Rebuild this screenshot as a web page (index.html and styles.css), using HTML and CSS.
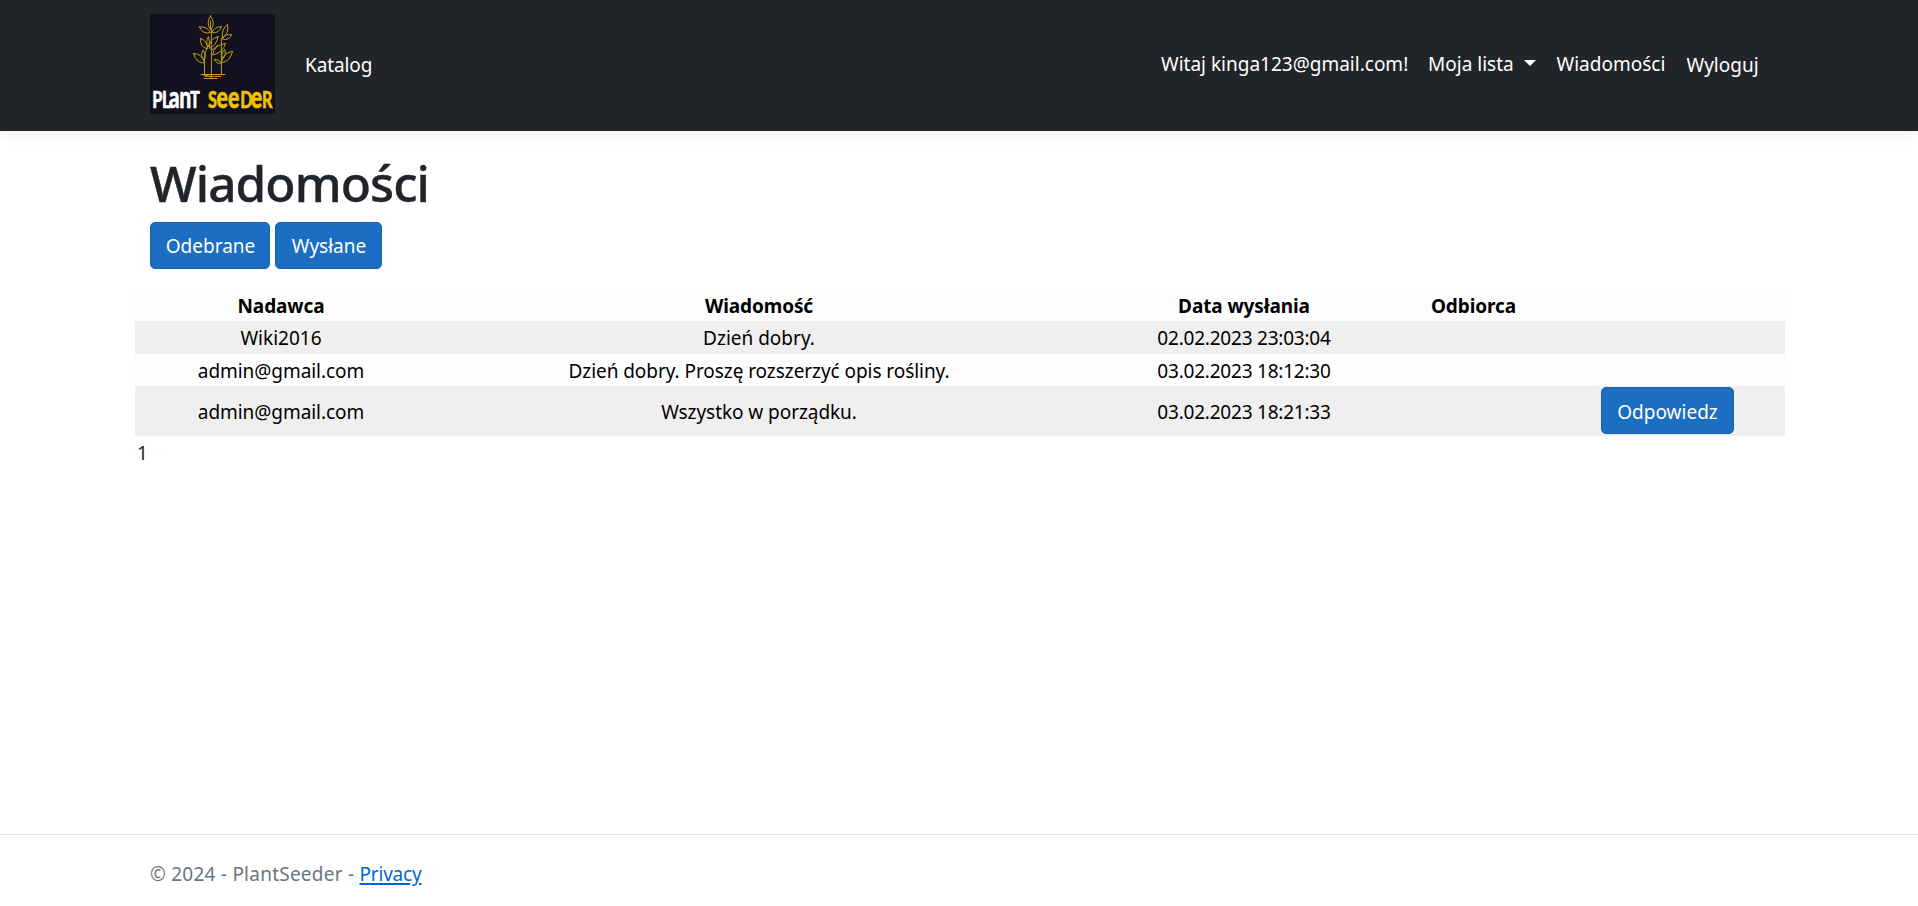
FILE: index.html
```html
<!DOCTYPE html>
<html lang="pl">
<head>
<meta charset="utf-8">
<title>Wiadomości - PlantSeeder</title>
<link rel="stylesheet" href="styles.css">
</head>
<body>
<header class="navbar">
  <div class="container navbar-inner">
    <a class="brand" href="#">
      <svg class="logo" viewBox="0 0 125 100" width="125" height="100" role="img" aria-label="Plant Seeder">
        <rect width="125" height="100" fill="#11111f"/>
        <g fill="none" stroke="#c39d12" stroke-width="1" stroke-linecap="round" stroke-linejoin="round">
          <path d="M54.5 60V44Q54.5 38 57 34M61.4 64V14M71.4 60V24"/>
          <path d="M51 60.5H75M55 62.3H71M52 60.5L60 62.5M54 64.5H67"/>
          <path d="M60.5 2Q55.5 9 60.8 16Q66 9 60.5 2ZM60.5 7V14"/>
          <path d="M49.500 13Q57 12 60.500 18.500Q53 21 49.500 13ZM71.500 12.500Q64 13 62 18.500Q69 20 71.500 12.500Z"/>
          <path d="M77.500 10.500Q71 15 72.500 24Q79.500 19 77.500 10.500ZM81.500 21Q75 19 72.500 25Q79 27 81.500 21Z"/>
          <path d="M50.500 24.500Q50 34 57.500 34.500Q57 26 50.500 24.500ZM68 22.500Q58 26 59.500 34.500Q67 31 68 22.500ZM58.300 23Q55 28 58.300 33Q61 28 58.300 23Z"/>
          <path d="M43.500 39.500Q46 49.500 55 49Q52 39.500 43.500 39.500ZM53 36.500Q49.500 41 54 46.500Q57 41 53 36.500Z"/>
          <path d="M75.500 29.500Q64 31 62.500 41Q73 39 75.500 29.500ZM62 36Q66 33 68 31"/>
          <path d="M82.500 37.500Q73 38 71.500 48.500Q80 48 82.500 37.500ZM74.500 35.500Q70.500 40 72.500 45Q77 41 74.500 35.500ZM64.500 45.500Q68 44.500 71.500 49Q66.500 50.500 64.500 45.500Z"/>
        </g>
        <g class="logo-text">
          <text class="logo-white"><tspan class="cap" x="3" y="94">P</tspan><tspan class="cap" x="16.500">L</tspan><tspan class="low" x="26">a</tspan><tspan class="low" x="40.500">n</tspan><tspan class="cap" x="55.500">T</tspan></text>
          <text class="logo-gold"><tspan class="cap" x="80.500" y="94">S</tspan><tspan class="low" x="92.500">e</tspan><tspan class="low" x="108.500">e</tspan><tspan class="cap" x="125.500">D</tspan><tspan class="low" x="140">e</tspan><tspan class="cap" x="155.500">R</tspan></text>
        </g>
      </svg>
    </a>
    <nav class="nav-main"><a class="nav-link low-link" href="#">Katalog</a></nav>
    <nav class="nav-user">
      <a class="nav-link greeting" href="#">Witaj kinga123@gmail.com!</a>
      <a class="nav-link dropdown" href="#">Moja lista<span class="caret"></span></a>
      <a class="nav-link messages" href="#">Wiadomości</a>
      <a class="nav-link logout low-link" href="#">Wyloguj</a>
    </nav>
  </div>
</header>

<main class="container">
  <h1>Wiadomości</h1>
  <div class="actions">
    <button class="btn btn-inbox">Odebrane</button>
    <button class="btn btn-sent">Wysłane</button>
  </div>
  <table class="messages-table">
    <colgroup><col class="c-from"><col class="c-text"><col class="c-date"><col class="c-to"><col class="c-act"></colgroup>
    <thead>
      <tr><th>Nadawca</th><th>Wiadomość</th><th>Data wysłania</th><th>Odbiorca</th><th></th></tr>
    </thead>
    <tbody>
      <tr><td>Wiki2016</td><td>Dzień dobry.</td><td class="date">02.02.2023 23:03:04</td><td></td><td></td></tr>
      <tr class="short"><td>admin@gmail.com</td><td>Dzień dobry. Proszę rozszerzyć opis rośliny.</td><td class="date">03.02.2023 18:12:30</td><td></td><td></td></tr>
      <tr class="tall"><td>admin@gmail.com</td><td>Wszystko w porządku.</td><td class="date">03.02.2023 18:21:33</td><td></td><td class="action"><button class="btn btn-reply">Odpowiedz</button></td></tr>
    </tbody>
  </table>
  <div class="pager">1</div>
</main>

<footer class="footer">
  <div class="container footer-inner"><span>© 2024 - PlantSeeder - </span><a href="#">Privacy</a></div>
</footer>
</body>
</html>
```
FILE: styles.css
```css
* { box-sizing: border-box; }

body {
  margin: 0;
  height: 906px;
  display: flex;
  flex-direction: column;
  overflow: hidden;
  background: #fff;
  color: #212529;
  font: 19px/30px "Noto Sans", "Open Sans", sans-serif;
}

.container {
  width: 1650px;
  margin-left: 135px;
  padding: 0 15px;
}

.navbar {
  height: 131px;
  flex: none;
  padding-top: 14px;
  background: #212529;
  box-shadow: 0 5px 15px rgba(0, 0, 0, .05);
}

.navbar-inner {
  display: flex;
  align-items: center;
  height: 100px;
}

.brand { width: 145px; height: 100px; }
.logo { display: block; }
.logo-text { transform: scaleX(.72); font-family: Lato, sans-serif; font-weight: 900; }
.cap { font-size: 22.5px; }
.low { font-size: 29.5px; }
.logo-white { fill: #fff; stroke: #fff; stroke-width: .5px; }
.logo-gold { fill: #f2c200; stroke: #f2c200; stroke-width: .5px; }

.nav-link {
  display: block;
  padding: 0 10px;
  color: #fff;
  text-decoration: none;
  white-space: nowrap;
}
.low-link { padding-top: 2px; }
.nav-main { letter-spacing: -.1px; }
.nav-user { display: flex; align-items: center; margin-left: auto; margin-right: 1px; }
.greeting { width: 267px; }
.dropdown { width: 128.5px; }
.messages { width: 130px; }
.logout { width: 92.5px; }
.caret {
  display: inline-block;
  margin-left: 10.5px;
  vertical-align: 5px;
  border-top: 6px solid #fff;
  border-left: 6px solid transparent;
  border-right: 6px solid transparent;
}

main { flex: 1; }

h1 {
  margin: 22px 0 9px;
  font-size: 49.5px;
  line-height: 60px;
  font-weight: 500;
  letter-spacing: -.9px;
  -webkit-text-stroke: .4px #212529;
}

.actions { display: flex; gap: 5px; height: 47px; margin-bottom: 20px; }

.btn {
  height: 47px;
  padding: 0;
  border: 1px solid #1861ac;
  border-radius: 5px;
  background: #1b6ec2;
  color: #fff;
  font: inherit;
}
.btn-inbox { width: 120px; padding-left: 1px; }
.btn-sent { width: 107px; padding-left: 1px; }
.btn-reply { display: block; width: 133px; margin: 0 auto; padding-top: 3px; }

.messages-table {
  width: 1650px;
  margin-left: -15px;
  table-layout: fixed;
  border-collapse: collapse;
  color: #000;
  text-align: center;
}
.c-from { width: 292px; }
.c-text { width: 664px; }
.c-date { width: 306px; }
.c-to { width: 153px; }
.c-act { width: 235px; }
.messages-table th, .messages-table td { padding: 0; }
.messages-table tr { height: 32px; background: #fdfdfd; }
.messages-table th { padding-top: 2px; letter-spacing: -.1px; }
.messages-table tbody tr { height: 33px; }
.messages-table tbody tr:nth-child(odd) { background: #efefef; }
.messages-table tbody .short { height: 32px; }
.messages-table tbody .short td, .messages-table tbody .tall td { padding-top: 2px; letter-spacing: -.06px; }
.messages-table tbody .tall { height: 50px; }
.messages-table tbody .tall .action { padding: 0 0 2px; letter-spacing: 0; }
.messages-table tbody td.date { letter-spacing: -.22px; }

.pager { margin: 2px 0 0 -13px; }

.footer {
  flex: none;
  height: 72px;
  border-top: 1px solid #dee2e6;
  color: #6c757d;
}
.footer-inner { padding-top: 24px; white-space: pre; }
.footer span { letter-spacing: .24px; }
.footer a { color: #0366d6; letter-spacing: -.2px; text-underline-offset: 2px; text-decoration-thickness: 2px; }
```
